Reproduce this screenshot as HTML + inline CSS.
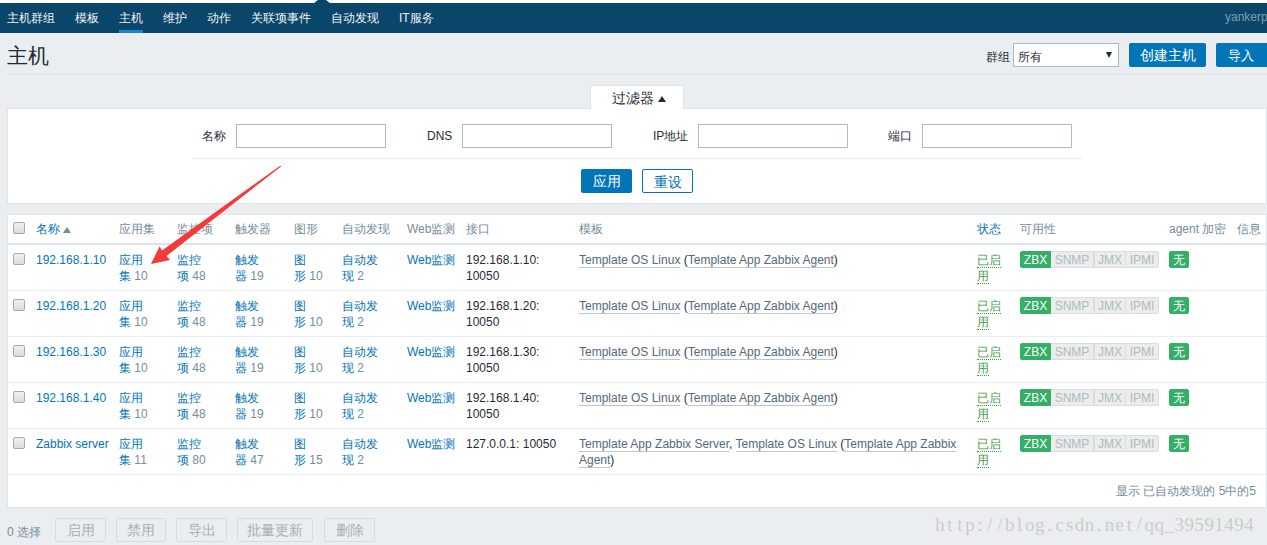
<!DOCTYPE html><html><head><meta charset="utf-8"><style>
*{box-sizing:border-box}
html,body{margin:0;padding:0;width:1267px;height:545px;overflow:hidden;background:#ebeef0;font-family:"Liberation Sans",sans-serif;font-size:12px;color:#1f2c33;position:relative}
.a{position:absolute;white-space:nowrap;line-height:16px}
.nav{position:absolute;left:0;top:3px;width:1267px;height:30px;background:#0a466a}
.navi{position:absolute;top:10px;color:#f2f4f5;line-height:16px}
.sel{position:absolute;left:119px;top:30px;width:24px;height:3px;background:#168acd}
.hline{position:absolute;height:1px;background:#dfe4e7}
.box{position:absolute;background:#fff;border:1px solid #dfe4e7}
.inp{position:absolute;background:#fff;border:1px solid #acbbc2;height:24px}
.btn{position:absolute;background:#0275b8;border-radius:2px;color:#fff;text-align:center;height:24px;line-height:26px}
.btn2{position:absolute;background:#fff;border:1px solid #0275b8;border-radius:2px;color:#0275b8;text-align:center;height:24px;line-height:25px}
.dbtn{position:absolute;background:#ebeef0;border:1px solid #d5dde1;border-radius:2px;color:#a3b1b8;text-align:center;height:24px;line-height:24px;top:518px}
.th{position:absolute;top:221px;color:#768d99;line-height:16px;white-space:nowrap}
.lk{color:#0275b8}
.gr{color:#768d99}
.cb{position:absolute;left:13px;width:12px;height:12px;border:1px solid #a8a8a8;border-radius:2px;background:linear-gradient(#f0f0f0,#dcdcdc)}
.tm{color:#55697a;border-bottom:1px solid #bcc7cd}
.en{color:#429e47;border-bottom:1px dotted #429e47}
.bz{position:absolute;height:17px;line-height:17px;font-size:12px;text-align:center;border:1px solid}
.tri{position:absolute;width:0;height:0;border-left:4px solid transparent;border-right:4px solid transparent}
.up{border-bottom:6px solid #768d99}
.dn{border-top:6px solid #1f2c33}
.g{background:#34af67;border-color:#34af67;color:#fff}
.x{background:#ececec;border-color:#d9dee1;color:#acbbc2}
</style></head><body>
<div style="position:absolute;left:0;top:0;width:1267px;height:3px;background:#fff"></div>
<div class="nav"></div>
<svg style="position:absolute;left:0;top:0" width="1267" height="4"><polygon points="313.5,3.5 318,0 326,0 330.5,3.5" fill="#0a466a"/></svg>
<div class="navi" style="left:7px">主机群组</div>
<div class="navi" style="left:75px">模板</div>
<div class="navi" style="left:119px">主机</div>
<div class="navi" style="left:163px">维护</div>
<div class="navi" style="left:207px">动作</div>
<div class="navi" style="left:251px">关联项事件</div>
<div class="navi" style="left:331px">自动发现</div>
<div class="navi" style="left:399px">IT服务</div>
<div class="sel"></div>
<div class="navi" style="left:1225px;top:9px;color:#7e9fb3">yankerp</div>
<div class="a" style="left:7px;top:42px;font-size:21px;line-height:28px;color:#1f2c33;font-weight:300">主机</div>
<div class="hline" style="left:7px;top:74px;width:1260px"></div>
<div class="a" style="left:986px;top:49px">群组</div>
<div class="inp" style="left:1013px;top:43px;width:106px"></div>
<div class="a" style="left:1018px;top:49px">所有</div>
<div class="tri dn" style="left:1106px;top:52px;border-left-width:3.5px;border-right-width:3.5px"></div>
<div class="btn" style="left:1129px;top:43px;width:77px;font-size:13.5px">创建主机</div>
<div class="btn" style="left:1216px;top:43px;width:60px;font-size:13px;text-align:left;padding-left:12px">导入</div>
<div class="box" style="left:590px;top:85px;width:94px;height:30px;border-bottom:none"></div>
<div class="box" style="left:7px;top:108px;width:1260px;height:96px"></div>
<div style="position:absolute;left:591px;top:108px;width:92px;height:2px;background:#fff"></div>
<div class="a" style="left:612px;top:91px;font-size:13.5px">过滤器</div><div class="tri up" style="left:658px;top:96px;border-bottom-color:#1f2c33"></div>
<div class="a" style="left:202px;top:128px">名称</div>
<div class="inp" style="left:236px;top:124px;width:150px"></div>
<div class="a" style="left:427px;top:128px">DNS</div>
<div class="inp" style="left:462px;top:124px;width:150px"></div>
<div class="a" style="left:653px;top:128px">IP地址</div>
<div class="inp" style="left:698px;top:124px;width:150px"></div>
<div class="a" style="left:888px;top:128px">端口</div>
<div class="inp" style="left:922px;top:124px;width:150px"></div>
<div class="hline" style="left:192px;top:158px;width:890px;background:#ebeef0"></div>
<div class="btn" style="left:581px;top:169px;width:51px;font-size:13.5px">应用</div>
<div class="btn2" style="left:642px;top:169px;width:51px;font-size:13.5px">重设</div>
<div class="box" style="left:7px;top:214px;width:1260px;height:294px"></div>
<div class="hline" style="left:8px;top:243px;width:1258px;height:2px"></div>
<div class="cb" style="top:222px"></div>
<div class="tri up" style="left:63px;top:227px"></div>
<div class="th" style="left:36px"><span class='lk'>名称</span></div>
<div class="th" style="left:119px">应用集</div>
<div class="th" style="left:177px">监控项</div>
<div class="th" style="left:235px">触发器</div>
<div class="th" style="left:294px">图形</div>
<div class="th" style="left:342px">自动发现</div>
<div class="th" style="left:407px">Web监测</div>
<div class="th" style="left:466px">接口</div>
<div class="th" style="left:579px">模板</div>
<div class="th" style="left:977px"><span class='lk'>状态</span></div>
<div class="th" style="left:1020px">可用性</div>
<div class="th" style="left:1169px">agent 加密</div>
<div class="th" style="left:1237px">信息</div>
<div class="cb" style="top:253px"></div>
<div class="a lk" style="left:36px;top:252px">192.168.1.10</div>
<div class="a lk" style="left:119px;top:252px">应用<br>集 <span class="gr">10</span></div>
<div class="a lk" style="left:177px;top:252px">监控<br>项 <span class="gr">48</span></div>
<div class="a lk" style="left:235px;top:252px">触发<br>器 <span class="gr">19</span></div>
<div class="a lk" style="left:294px;top:252px">图<br>形 <span class="gr">10</span></div>
<div class="a lk" style="left:342px;top:252px">自动发<br>现 <span class="gr">2</span></div>
<div class="a lk" style="left:407px;top:252px">Web监测</div>
<div class="a" style="left:466px;top:252px">192.168.1.10:<br>10050</div>
<div class="a" style="left:579px;top:252px;color:#1f2c33"><span class="tm">Template OS Linux</span> (<span class="tm">Template App Zabbix Agent</span>)</div>
<div class="a" style="left:977px;top:252px"><span class="en">已启</span><br><span class="en">用</span></div>
<div class="bz g" style="left:1020px;top:251px;width:31px;border-radius:2px 0 0 2px">ZBX</div>
<div class="bz x" style="left:1051px;top:251px;width:43px;border-left:none">SNMP</div>
<div class="bz x" style="left:1094px;top:251px;width:32px">JMX</div>
<div class="bz x" style="left:1126px;top:251px;width:33px;border-left:none;border-radius:0 2px 2px 0">IPMI</div>
<div class="bz g" style="left:1169px;top:251px;width:20px;border-radius:2px">无</div>
<div class="hline" style="left:8px;top:290px;width:1258px;background:#ebeef0"></div>
<div class="cb" style="top:299px"></div>
<div class="a lk" style="left:36px;top:298px">192.168.1.20</div>
<div class="a lk" style="left:119px;top:298px">应用<br>集 <span class="gr">10</span></div>
<div class="a lk" style="left:177px;top:298px">监控<br>项 <span class="gr">48</span></div>
<div class="a lk" style="left:235px;top:298px">触发<br>器 <span class="gr">19</span></div>
<div class="a lk" style="left:294px;top:298px">图<br>形 <span class="gr">10</span></div>
<div class="a lk" style="left:342px;top:298px">自动发<br>现 <span class="gr">2</span></div>
<div class="a lk" style="left:407px;top:298px">Web监测</div>
<div class="a" style="left:466px;top:298px">192.168.1.20:<br>10050</div>
<div class="a" style="left:579px;top:298px;color:#1f2c33"><span class="tm">Template OS Linux</span> (<span class="tm">Template App Zabbix Agent</span>)</div>
<div class="a" style="left:977px;top:298px"><span class="en">已启</span><br><span class="en">用</span></div>
<div class="bz g" style="left:1020px;top:297px;width:31px;border-radius:2px 0 0 2px">ZBX</div>
<div class="bz x" style="left:1051px;top:297px;width:43px;border-left:none">SNMP</div>
<div class="bz x" style="left:1094px;top:297px;width:32px">JMX</div>
<div class="bz x" style="left:1126px;top:297px;width:33px;border-left:none;border-radius:0 2px 2px 0">IPMI</div>
<div class="bz g" style="left:1169px;top:297px;width:20px;border-radius:2px">无</div>
<div class="hline" style="left:8px;top:336px;width:1258px;background:#ebeef0"></div>
<div class="cb" style="top:345px"></div>
<div class="a lk" style="left:36px;top:344px">192.168.1.30</div>
<div class="a lk" style="left:119px;top:344px">应用<br>集 <span class="gr">10</span></div>
<div class="a lk" style="left:177px;top:344px">监控<br>项 <span class="gr">48</span></div>
<div class="a lk" style="left:235px;top:344px">触发<br>器 <span class="gr">19</span></div>
<div class="a lk" style="left:294px;top:344px">图<br>形 <span class="gr">10</span></div>
<div class="a lk" style="left:342px;top:344px">自动发<br>现 <span class="gr">2</span></div>
<div class="a lk" style="left:407px;top:344px">Web监测</div>
<div class="a" style="left:466px;top:344px">192.168.1.30:<br>10050</div>
<div class="a" style="left:579px;top:344px;color:#1f2c33"><span class="tm">Template OS Linux</span> (<span class="tm">Template App Zabbix Agent</span>)</div>
<div class="a" style="left:977px;top:344px"><span class="en">已启</span><br><span class="en">用</span></div>
<div class="bz g" style="left:1020px;top:343px;width:31px;border-radius:2px 0 0 2px">ZBX</div>
<div class="bz x" style="left:1051px;top:343px;width:43px;border-left:none">SNMP</div>
<div class="bz x" style="left:1094px;top:343px;width:32px">JMX</div>
<div class="bz x" style="left:1126px;top:343px;width:33px;border-left:none;border-radius:0 2px 2px 0">IPMI</div>
<div class="bz g" style="left:1169px;top:343px;width:20px;border-radius:2px">无</div>
<div class="hline" style="left:8px;top:382px;width:1258px;background:#ebeef0"></div>
<div class="cb" style="top:391px"></div>
<div class="a lk" style="left:36px;top:390px">192.168.1.40</div>
<div class="a lk" style="left:119px;top:390px">应用<br>集 <span class="gr">10</span></div>
<div class="a lk" style="left:177px;top:390px">监控<br>项 <span class="gr">48</span></div>
<div class="a lk" style="left:235px;top:390px">触发<br>器 <span class="gr">19</span></div>
<div class="a lk" style="left:294px;top:390px">图<br>形 <span class="gr">10</span></div>
<div class="a lk" style="left:342px;top:390px">自动发<br>现 <span class="gr">2</span></div>
<div class="a lk" style="left:407px;top:390px">Web监测</div>
<div class="a" style="left:466px;top:390px">192.168.1.40:<br>10050</div>
<div class="a" style="left:579px;top:390px;color:#1f2c33"><span class="tm">Template OS Linux</span> (<span class="tm">Template App Zabbix Agent</span>)</div>
<div class="a" style="left:977px;top:390px"><span class="en">已启</span><br><span class="en">用</span></div>
<div class="bz g" style="left:1020px;top:389px;width:31px;border-radius:2px 0 0 2px">ZBX</div>
<div class="bz x" style="left:1051px;top:389px;width:43px;border-left:none">SNMP</div>
<div class="bz x" style="left:1094px;top:389px;width:32px">JMX</div>
<div class="bz x" style="left:1126px;top:389px;width:33px;border-left:none;border-radius:0 2px 2px 0">IPMI</div>
<div class="bz g" style="left:1169px;top:389px;width:20px;border-radius:2px">无</div>
<div class="hline" style="left:8px;top:428px;width:1258px;background:#ebeef0"></div>
<div class="cb" style="top:437px"></div>
<div class="a lk" style="left:36px;top:436px">Zabbix server</div>
<div class="a lk" style="left:119px;top:436px">应用<br>集 <span class="gr">11</span></div>
<div class="a lk" style="left:177px;top:436px">监控<br>项 <span class="gr">80</span></div>
<div class="a lk" style="left:235px;top:436px">触发<br>器 <span class="gr">47</span></div>
<div class="a lk" style="left:294px;top:436px">图<br>形 <span class="gr">15</span></div>
<div class="a lk" style="left:342px;top:436px">自动发<br>现 <span class="gr">2</span></div>
<div class="a lk" style="left:407px;top:436px">Web监测</div>
<div class="a" style="left:466px;top:436px">127.0.0.1: 10050</div>
<div class="a" style="left:579px;top:436px;color:#1f2c33"><span class="tm">Template App Zabbix Server</span>, <span class="tm">Template OS Linux</span> (<span class="tm">Template App Zabbix</span><br><span class="tm">Agent</span>)</div>
<div class="a" style="left:977px;top:436px"><span class="en">已启</span><br><span class="en">用</span></div>
<div class="bz g" style="left:1020px;top:435px;width:31px;border-radius:2px 0 0 2px">ZBX</div>
<div class="bz x" style="left:1051px;top:435px;width:43px;border-left:none">SNMP</div>
<div class="bz x" style="left:1094px;top:435px;width:32px">JMX</div>
<div class="bz x" style="left:1126px;top:435px;width:33px;border-left:none;border-radius:0 2px 2px 0">IPMI</div>
<div class="bz g" style="left:1169px;top:435px;width:20px;border-radius:2px">无</div>
<div class="hline" style="left:8px;top:474px;width:1258px;background:#ebeef0"></div>
<div class="a gr" style="left:1000px;top:483px;width:256px;text-align:right">显示 已自动发现的 5中的5</div>
<div class="a gr" style="left:7px;top:524px">0 选择</div>
<div class="dbtn" style="left:55px;width:51px;font-size:13.5px">启用</div>
<div class="dbtn" style="left:116px;width:50px;font-size:13.5px">禁用</div>
<div class="dbtn" style="left:176px;width:51px;font-size:13.5px">导出</div>
<div class="dbtn" style="left:237px;width:76px;font-size:13.5px">批量更新</div>
<div class="dbtn" style="left:324px;width:51px;font-size:13.5px">删除</div>
<div class="a" style="left:935px;top:514px;font-family:'Liberation Serif',serif;font-size:19px;line-height:22px;color:#cdccc6"><span style="display:inline-block;width:9.97px;text-align:center">h</span><span style="display:inline-block;width:9.97px;text-align:center">t</span><span style="display:inline-block;width:9.97px;text-align:center">t</span><span style="display:inline-block;width:9.97px;text-align:center">p</span><span style="display:inline-block;width:9.97px;text-align:center">:</span><span style="display:inline-block;width:9.97px;text-align:center">/</span><span style="display:inline-block;width:9.97px;text-align:center">/</span><span style="display:inline-block;width:9.97px;text-align:center">b</span><span style="display:inline-block;width:9.97px;text-align:center">l</span><span style="display:inline-block;width:9.97px;text-align:center">o</span><span style="display:inline-block;width:9.97px;text-align:center">g</span><span style="display:inline-block;width:9.97px;text-align:center">.</span><span style="display:inline-block;width:9.97px;text-align:center">c</span><span style="display:inline-block;width:9.97px;text-align:center">s</span><span style="display:inline-block;width:9.97px;text-align:center">d</span><span style="display:inline-block;width:9.97px;text-align:center">n</span><span style="display:inline-block;width:9.97px;text-align:center">.</span><span style="display:inline-block;width:9.97px;text-align:center">n</span><span style="display:inline-block;width:9.97px;text-align:center">e</span><span style="display:inline-block;width:9.97px;text-align:center">t</span><span style="display:inline-block;width:9.97px;text-align:center">/</span><span style="display:inline-block;width:9.97px;text-align:center">q</span><span style="display:inline-block;width:9.97px;text-align:center">q</span><span style="display:inline-block;width:9.97px;text-align:center">_</span><span style="display:inline-block;width:9.97px;text-align:center">3</span><span style="display:inline-block;width:9.97px;text-align:center">9</span><span style="display:inline-block;width:9.97px;text-align:center">5</span><span style="display:inline-block;width:9.97px;text-align:center">9</span><span style="display:inline-block;width:9.97px;text-align:center">1</span><span style="display:inline-block;width:9.97px;text-align:center">4</span><span style="display:inline-block;width:9.97px;text-align:center">9</span><span style="display:inline-block;width:9.97px;text-align:center">4</span></div>
<svg style="position:absolute;left:0;top:0" width="1267" height="545"><polygon points="280.5,165.5 162,250.5 159.5,246.5 151,264 170,260 166.5,256 281,166.5" fill="#f23a3a"/></svg>
</body></html>
